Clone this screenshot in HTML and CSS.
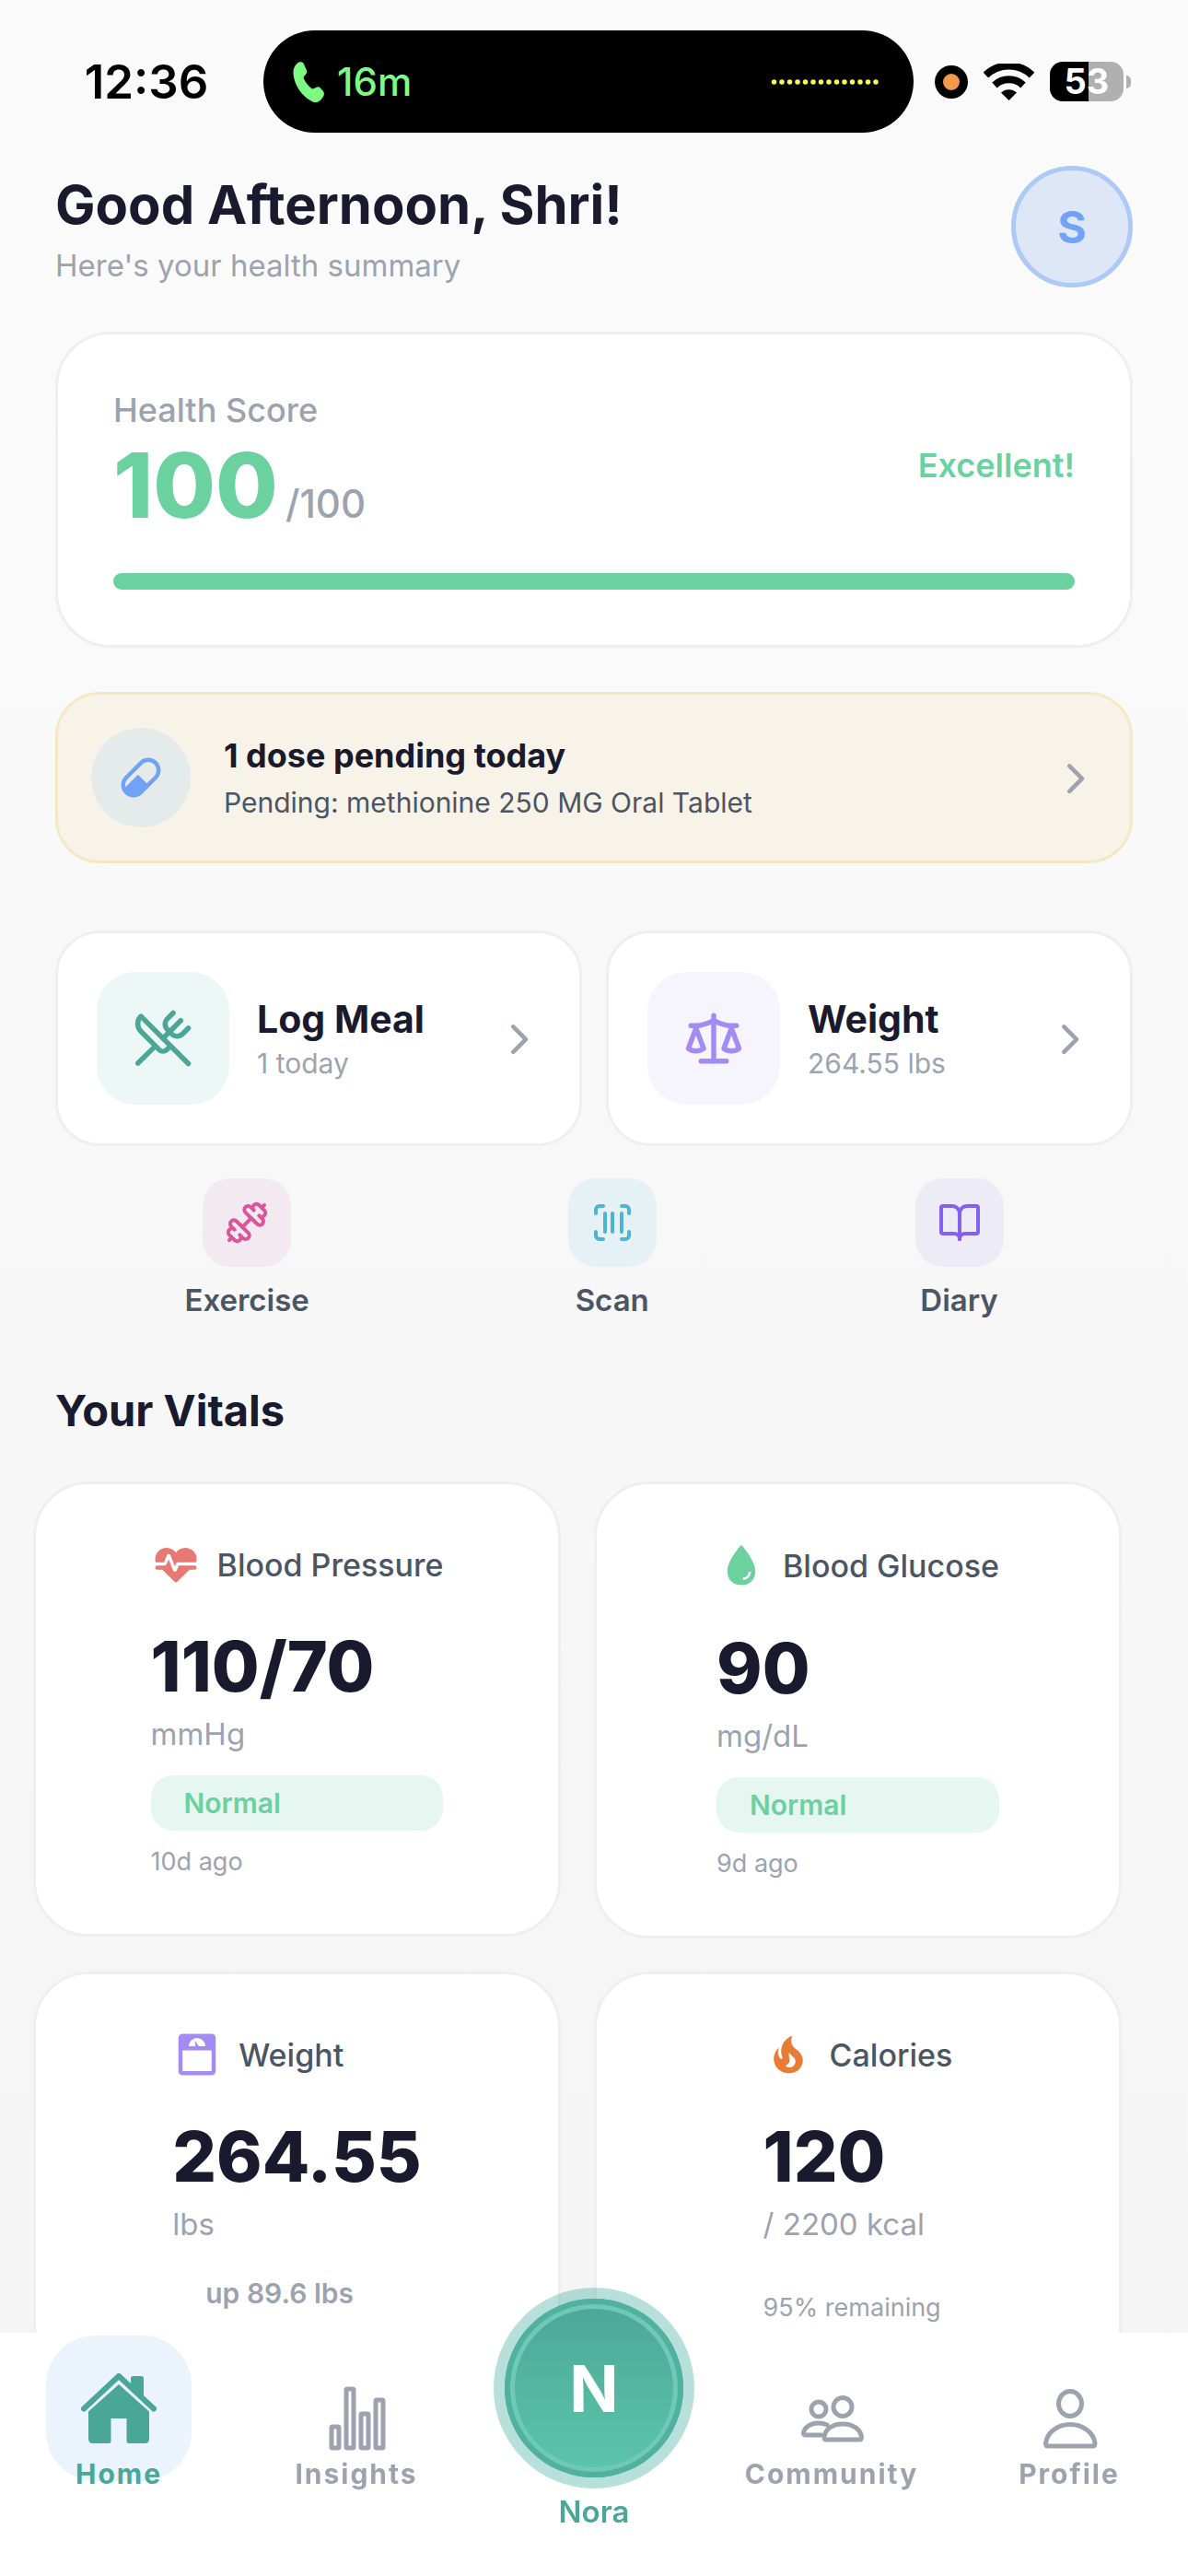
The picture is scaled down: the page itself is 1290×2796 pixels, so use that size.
FILE: index.html
```html
<!DOCTYPE html>
<html lang="en">
  <head>
    <meta charset="UTF-8" />
    <meta name="viewport" content="width=device-width, initial-scale=1.0" />
    <title>Health Summary</title>

    <link rel="stylesheet" href="styles.css">
  </head>

  <body>
    <div class="status-bar">
      <div class="status-time">12:36</div>
      <div class="island">
        <svg viewBox="0 0 34 46" width="34" height="46">
          <path d="M5 2.500c2-1.800 5.500-1.600 6.800.8l3 6.700c.8 2 .3 3.600-1 5l-1.600 1.800c-.8 1-.7 2 0 3.300 1.800 3.600 4.500 7 7.500 9.500 1.200 1 2 1.100 3.200.5l2.200-1.200c1.600-.9 3.300-.8 4.700.5l3 3.400c1.600 2 1.500 4.600-.2 6.600l-2.200 2.800c-2.300 2.900-5.800 3.600-9.300 2C9.500 38.500 1 25.500.500 13.500.3 8.500 2 5 5 2.500z" fill="#7dfb83"/>
        </svg>
        <span class="call-length">16m</span>
        <svg class="call-wave" viewBox="0 0 117 6" width="117" height="6">
          <path d="M3.500 3H114.200" fill="none" stroke="#f9fb52" stroke-width="5.500" stroke-linecap="round" stroke-dasharray="0 8.500"/>
        </svg>
      </div>
      <div class="status-icons">
        <span class="mic-dot"></span>
        <svg viewBox="0 0 55 40" width="55" height="40">
          <path d="M2.500 12.500a36 36 0 0 1 50 0" fill="none" stroke="#000" stroke-width="8"/>
          <path d="M12 23.500a22.500 22.500 0 0 1 31 0" fill="none" stroke="#000" stroke-width="8"/>
          <path d="M19 31.500a12.500 12.500 0 0 1 17 0L27.500 40z"/>
        </svg>
        <span class="battery">53</span>
      </div>
    </div>

    <main>
      <header class="greeting">
        <div>
          <h1>Good Afternoon, Shri!</h1>
          <p>Here's your health summary</p>
        </div>
        <button class="avatar" type="button">S</button>
      </header>

      <section class="card score-card">
        <div class="score-top">
          <div>
            <div class="score-label">Health Score</div>
            <div class="score-value">100<span>/100</span></div>
          </div>
          <div class="score-status">Excellent!</div>
        </div>
        <div class="score-track"><div class="score-fill" style="width: 100%"></div></div>
      </section>

      <a class="pending-card" href="#">
        <span class="pending-icon">
          <svg viewBox="0 0 24 24" width="54" height="54" fill="#70a3f5"><path d="M4.220 11.290L11.290 4.220C13.640 1.880 17.430 1.880 19.780 4.220C22.120 6.560 22.120 10.360 19.780 12.710L12.710 19.780C10.360 22.120 6.560 22.120 4.220 19.780C1.880 17.430 1.880 13.640 4.220 11.290M5.640 12.710C4.590 13.750 4.240 15.240 4.600 16.570L10.590 10.590L14.830 14.830L18.360 11.290C19.930 9.730 19.930 7.200 18.360 5.640C16.800 4.070 14.270 4.070 12.710 5.640L5.640 12.710Z"/></svg>
        </span>
        <span class="pending-text">
          <strong>1 dose pending today</strong>
          <small>Pending: methionine 250 MG Oral Tablet</small>
        </span>
        <svg class="chevron" viewBox="1 1 21 21"><path d="m9 18 6-6-6-6"/></svg>
      </a>

      <div class="actions">
        <a class="card action" href="#">
          <span class="action-icon meal">
            <svg class="line-icon" viewBox="0 0 24 24" width="66" height="66"><path d="m16 2-2.300 2.300a3 3 0 0 0 0 4.200l1.800 1.800a3 3 0 0 0 4.200 0L22 8"/><path d="M15 15 3.300 3.300a4.200 4.200 0 0 0 0 6l7.300 7.300c.7.7 2 .7 2.800 0L15 15Zm0 0 7 7"/><path d="m2.100 21.800 6.400-6.300"/><path d="m19 5-7 7"/></svg>
          </span>
          <span class="action-text">
            <strong>Log Meal</strong>
            <small>1 today</small>
          </span>
          <svg class="chevron" viewBox="1 1 21 21"><path d="m9 18 6-6-6-6"/></svg>
        </a>
        <a class="card action" href="#">
          <span class="action-icon weight">
            <svg class="line-icon" viewBox="0 0 24 24" width="66" height="66"><path d="m16 16 3-8 3 8c-.87.65-1.920 1-3 1s-2.130-.35-3-1Z"/><path d="m2 16 3-8 3 8c-.87.65-1.920 1-3 1s-2.130-.35-3-1Z"/><path d="M7 21h10"/><path d="M12 3v18"/><path d="M3 7h2c2 0 5-1 7-2 2 1 5 2 7 2h2"/></svg>
          </span>
          <span class="action-text">
            <strong>Weight</strong>
            <small>264.55 lbs</small>
          </span>
          <svg class="chevron" viewBox="1 1 21 21"><path d="m9 18 6-6-6-6"/></svg>
        </a>
      </div>

      <div class="shortcuts">
        <a class="shortcut" href="#">
          <span class="shortcut-icon exercise">
            <svg class="line-icon" viewBox="0 0 24 24" width="48" height="48"><path d="M17.596 12.768a2 2 0 1 0 2.829-2.829l-1.768-1.767a2 2 0 0 0 2.828-2.829l-2.828-2.828a2 2 0 0 0-2.829 2.828l-1.767-1.768a2 2 0 1 0-2.829 2.829z"/><path d="m2.500 21.500 1.400-1.400"/><path d="m20.100 3.900 1.400-1.400"/><path d="M5.343 21.485a2 2 0 1 0 2.829-2.828l1.767 1.768a2 2 0 1 0 2.829-2.829l-6.364-6.364a2 2 0 1 0-2.829 2.829l1.768 1.767a2 2 0 0 0-2.828 2.829z"/><path d="m9.600 14.400 4.800-4.800"/></svg>
          </span>
          Exercise
        </a>
        <a class="shortcut" href="#">
          <span class="shortcut-icon scan">
            <svg class="line-icon" viewBox="0 0 24 24" width="48" height="48"><path d="M3 7V5a2 2 0 0 1 2-2h2M17 3h2a2 2 0 0 1 2 2v2M21 17v2a2 2 0 0 1-2 2h-2M7 21H5a2 2 0 0 1-2-2v-2M8 7v10M12 7v10M17 7v10"/></svg>
          </span>
          Scan
        </a>
        <a class="shortcut" href="#">
          <span class="shortcut-icon diary">
            <svg class="line-icon" viewBox="0 0 24 24" width="48" height="48"><path d="M12 7v14"/><path d="M3 18a1 1 0 0 1-1-1V4a1 1 0 0 1 1-1h5a4 4 0 0 1 4 4 4 4 0 0 1 4-4h5a1 1 0 0 1 1 1v13a1 1 0 0 1-1 1h-6a3 3 0 0 0-3 3 3 3 0 0 0-3-3z"/></svg>
          </span>
          Diary
        </a>
      </div>

      <h2>Your Vitals</h2>
    </main>

    <section class="vitals">
      <article class="card vital">
        <div class="vital-body">
          <div class="vital-head">
            <svg viewBox="0 0 24 24" width="54" height="54" fill="#e87972"><path d="M7.500 4A5.500 5.500 0 0 0 2 9.500C2 10 2.090 10.500 2.220 11H6.300L7.570 7.630C7.870 6.830 9.050 6.750 9.430 7.630L11.500 13L12.090 11.580C12.220 11.250 12.570 11 13 11H21.780C21.910 10.500 22 10 22 9.500A5.500 5.500 0 0 0 16.500 4C14.640 4 13 4.930 12 6.340C11 4.930 9.360 4 7.500 4M3 12.500A1 1 0 0 0 2 13.500A1 1 0 0 0 3 14.500H5.440L11 20C12 20.900 12 20.900 13 20L18.560 14.500H21A1 1 0 0 0 22 13.500A1 1 0 0 0 21 12.500H13.400L12.470 14.800C12.070 15.810 10.920 15.670 10.550 14.830L8.500 9.500L7.540 11.830C7.390 12.210 7.050 12.500 6.600 12.500H3Z"/></svg>
            Blood Pressure
          </div>
          <div class="vital-value">110/70</div>
          <div class="vital-unit">mmHg</div>
          <div class="badge badge-normal">Normal</div>
          <div class="vital-time">10d ago</div>
        </div>
      </article>

      <article class="card vital">
        <div class="vital-body">
          <div class="vital-head">
            <svg viewBox="0 0 512 512" width="54" height="56" fill="#6bd19f"><path d="M256 43.910s-144 158.300-144 270.300c0 88.360 55.640 144 144 144s144-55.640 144-144c0-112-144-270.300-144-270.300zm16 362.300v-24a60.070 60.070 0 0 0 60-60h24a84.090 84.090 0 0 1-84 84z"/></svg>
            Blood Glucose
          </div>
          <div class="vital-value">90</div>
          <div class="vital-unit">mg/dL</div>
          <div class="badge badge-normal">Normal</div>
          <div class="vital-time">9d ago</div>
        </div>
      </article>

      <article class="card vital">
        <div class="vital-body">
          <div class="vital-head">
            <svg viewBox="0 0 24 24" width="54" height="54" fill="#a48bf3"><path d="M5 2H19A2 2 0 0 1 21 4V20A2 2 0 0 1 19 22H5A2 2 0 0 1 3 20V4A2 2 0 0 1 5 2M12 4A4 4 0 0 0 8 8H11.260L10.850 5.230L12.900 8H16A4 4 0 0 0 12 4M5 10V20H19V10H5Z"/></svg>
            Weight
          </div>
          <div class="vital-value">264.55</div>
          <div class="vital-unit">lbs</div>
          <div class="badge">up 89.6 lbs</div>
        </div>
      </article>

      <article class="card vital">
        <div class="vital-body">
          <div class="vital-head">
            <svg viewBox="0 0 24 24" width="54" height="54" fill="#e87b35"><path d="M17.660 11.200C17.430 10.900 17.150 10.640 16.890 10.380C16.220 9.780 15.460 9.350 14.820 8.720C13.330 7.260 13 4.850 13.950 3C13 3.230 12.170 3.750 11.460 4.320C8.870 6.400 7.850 10.070 9.070 13.220C9.110 13.320 9.150 13.420 9.150 13.550C9.150 13.770 9 13.970 8.800 14.050C8.570 14.150 8.330 14.090 8.140 13.930C8.080 13.880 8.040 13.830 8 13.760C6.870 12.330 6.690 10.280 7.450 8.640C5.780 10 4.870 12.300 5 14.470C5.060 14.970 5.120 15.470 5.290 15.970C5.430 16.570 5.700 17.170 6 17.700C7.080 19.430 8.950 20.670 10.960 20.920C13.100 21.190 15.390 20.800 17.030 19.320C18.860 17.660 19.500 15 18.560 12.720L18.430 12.460C18.220 12 17.660 11.200 17.660 11.200M14.500 17.500C14.220 17.740 13.760 18 13.400 18.100C12.280 18.500 11.160 17.940 10.500 17.280C11.690 17 12.400 16.120 12.610 15.230C12.780 14.430 12.460 13.770 12.330 13C12.210 12.260 12.230 11.630 12.500 10.940C12.690 11.320 12.890 11.700 13.130 12C13.900 13 15.110 13.440 15.370 14.800C15.410 14.940 15.430 15.080 15.430 15.230C15.460 16.050 15.100 16.950 14.500 17.500Z"/></svg>
            Calories
          </div>
          <div class="vital-value">120</div>
          <div class="vital-unit">/ 2200 kcal</div>
          <div class="vital-time remaining">95% remaining</div>
        </div>
      </article>
    </section>

    <nav class="tab-bar">
      <a class="tab active" href="#">
        <span class="tab-icon">
          <svg viewBox="0 0 96 96" width="96" height="96">
            <path d="M61 15.500q0-2.500 2.500-2.500h9q2.500 0 2.500 2.500V39L61 26z" fill="#4aa696"/>
            <path d="M10 48.500 48 13l38 35.500" fill="none" stroke="#4aa696" stroke-width="6" stroke-linecap="round" stroke-linejoin="round"/>
            <path d="M48 22 15 51.500V81q0 5 5 5h17q2.500 0 2.500-2.500V59h17v24.500q0 2.500 2.500 2.500h17q5 0 5-5V51.500z" fill="#4aa696"/>
          </svg>
        </span>
        <span class="tab-label">Home</span>
      </a>
      <a class="tab" href="#">
        <span class="tab-icon">
          <svg class="tab-line" viewBox="0 0 96 96" width="96" height="96">
            <rect x="21" y="68" width="8" height="23" rx="1"/>
            <rect x="37" y="27" width="8" height="64" rx="1"/>
            <rect x="53" y="54" width="8" height="37" rx="1"/>
            <rect x="69" y="39" width="8" height="52" rx="1"/>
          </svg>
        </span>
        <span class="tab-label">Insights</span>
      </a>
      <a class="tab nora" href="#">
        <span class="nora-button"><span class="nora-ring">N</span></span>
        <span class="nora-label">Nora</span>
      </a>
      <a class="tab" href="#">
        <span class="tab-icon">
          <svg class="tab-line" viewBox="0 0 96 96" width="96" height="96">
            <circle cx="60" cy="46.500" r="10"/>
            <path d="M40 79c1-8.500 9-14 20-14s19.500 5.500 20.500 14q0 3-2 3H42q-2 0-2-3z"/>
            <circle cx="34" cy="49" r="8"/>
            <path d="M36.500 77H20q-2.500 0-2.500-2.500C18.500 68 26 64 34 64c3.500 0 6.500.8 9 2" stroke-linecap="round"/>
          </svg>
        </span>
        <span class="tab-label">Community</span>
      </a>
      <a class="tab" href="#">
        <span class="tab-icon">
          <svg class="tab-line" viewBox="0 0 96 96" width="96" height="96">
            <ellipse cx="49" cy="43" rx="12.500" ry="13.500"/>
            <path d="M22.500 86c1.500-12 13-20.500 26.500-20.500S74.500 74 76 86q0 3-2.500 3H25q-2.500 0-2.500-3z"/>
          </svg>
        </span>
        <span class="tab-label">Profile</span>
      </a>
    </nav>
  </body>
</html>
```
FILE: styles.css
```css
* {
  box-sizing: border-box;
}

body {
  margin: 0;
  min-height: 100vh;
  background: linear-gradient(180deg, #fbfbfb 0%, #f4f4f4 100%);
  font-family: Inter, 'Liberation Sans', sans-serif;
  color: #1a1a2e;
}

a {
  color: inherit;
  text-decoration: none;
}

h1, h2, p {
  margin: 0;
}

svg {
  flex: none;
}

/* status bar */
.status-bar {
  display: flex;
  align-items: center;
  padding-top: 33px;
}

.status-time {
  width: 286px;
  padding-left: 32px;
  text-align: center;
  font-size: 51px;
  font-weight: 600;
  color: #000;
}

.island {
  display: flex;
  align-items: center;
  flex: 1;
  height: 111px;
  padding: 0 38px 0 32px;
  border-radius: 56px;
  background: #000;
}

.call-length {
  margin-left: 14px;
  font-size: 42px;
  font-weight: 500;
  color: #7dfb83;
}

.call-wave {
  margin-left: auto;
}

.status-icons {
  display: flex;
  align-items: center;
  gap: 17px;
  width: 298px;
  padding-left: 23px;
}

.mic-dot {
  width: 36px;
  height: 36px;
  border: 9px solid #000;
  border-radius: 50%;
  background: #f19a4b;
}

.battery {
  position: relative;
  width: 80px;
  height: 43px;
  border-radius: 14px;
  background: linear-gradient(90deg, #000 52%, #b0b0b0 52%);
  color: #fff;
  font-size: 38px;
  font-weight: 700;
  line-height: 43px;
  text-align: center;
}

.battery::after {
  content: "";
  position: absolute;
  top: 15px;
  right: -8px;
  width: 5px;
  height: 14px;
  border-radius: 0 6px 6px 0;
  background: #b0b0b0;
}

/* greeting */
main {
  padding: 36px 60px 0;
}

.greeting {
  display: flex;
  align-items: center;
  justify-content: space-between;
}

h1 {
  font-size: 58px;
  font-weight: 700;
  line-height: 84px;
}

.greeting p {
  font-size: 33px;
  line-height: 48px;
  color: #9ca3af;
}

.avatar {
  width: 132px;
  height: 132px;
  padding: 0;
  border: 5px solid #adc9f5;
  border-radius: 50%;
  background: #dde7f7;
  font-family: inherit;
  font-size: 48px;
  font-weight: 700;
  color: #70a3f5;
}

/* cards */
.card {
  border: 3px solid #efefef;
  border-radius: 60px;
  background: #fff;
}

.score-card {
  margin-top: 48px;
  padding: 60px;
}

.score-top {
  display: flex;
  align-items: center;
  justify-content: space-between;
}

.score-label {
  font-size: 36px;
  font-weight: 500;
  line-height: 44px;
  color: #9ca3af;
}

.score-value {
  display: flex;
  align-items: baseline;
  gap: 8px;
  height: 120px;
  font-size: 98px;
  font-weight: 800;
  line-height: 120px;
  color: #6bd19f;
}

.score-value span {
  font-size: 42px;
  font-weight: 500;
  line-height: 48px;
  color: #9ca3af;
}

.score-status {
  font-size: 36px;
  font-weight: 600;
  color: #6bd19f;
}

.score-track {
  height: 18px;
  margin-top: 35px;
  border-radius: 9px;
  background: #f0f0f0;
}

.score-fill {
  height: 100%;
  border-radius: 9px;
  background: #6bd19f;
}

.pending-card {
  display: flex;
  align-items: center;
  gap: 36px;
  margin-top: 48px;
  padding: 36px;
  border: 3px solid #f5e8c4;
  border-radius: 48px;
  background: #f8f3e9;
}

.pending-icon {
  display: flex;
  align-items: center;
  justify-content: center;
  width: 108px;
  height: 108px;
  border-radius: 50%;
  background: #e5eaeb;
}

.pending-text,
.action-text {
  display: flex;
  flex-direction: column;
  flex: 1;
}

.pending-text strong {
  font-size: 36px;
  font-weight: 700;
  line-height: 54px;
}

.pending-text small {
  font-size: 30px;
  line-height: 48px;
  color: #4b5563;
}

.chevron {
  width: 48px;
  height: 48px;
  fill: none;
  stroke: #9ca3af;
  stroke-width: 2;
  stroke-linecap: round;
  stroke-linejoin: round;
}

.line-icon {
  fill: none;
  stroke: currentColor;
  stroke-width: 2;
  stroke-linecap: round;
  stroke-linejoin: round;
}

.actions {
  display: flex;
  gap: 26px;
  margin-top: 73px;
}

.action {
  display: flex;
  align-items: center;
  flex: 1;
  gap: 30px;
  padding: 42px;
  border-radius: 48px;
}

.action-icon {
  display: flex;
  align-items: center;
  justify-content: center;
  width: 144px;
  height: 144px;
  border-radius: 42px;
}

.meal {
  background: #edf7f5;
  color: #4aa696;
}

.weight {
  background: #f6f5fd;
  color: #a48bf3;
}

.action-text strong {
  font-size: 41px;
  font-weight: 700;
  line-height: 54px;
}

.action-text small {
  font-size: 30px;
  line-height: 42px;
  color: #9ca3af;
}

/* shortcuts */
.shortcuts {
  display: flex;
  justify-content: space-around;
  margin-top: 35px;
}

.shortcut {
  display: flex;
  flex-direction: column;
  align-items: center;
  gap: 15px;
  font-size: 33px;
  font-weight: 600;
  line-height: 42px;
  color: #4b5563;
}

.shortcut-icon {
  display: flex;
  align-items: center;
  justify-content: center;
  width: 96px;
  height: 96px;
  border-radius: 30px;
}

.exercise {
  background: #f3eaf1;
  color: #db5598;
}

.scan {
  background: #e5f1f4;
  color: #4fb3d1;
}

.diary {
  background: #edebf6;
  color: #855fee;
}

h2 {
  margin-top: 69px;
  font-size: 47px;
  font-weight: 700;
  line-height: 60px;
}

/* vitals */
.vitals {
  display: grid;
  grid-template-columns: 1fr 1fr;
  align-items: start;
  gap: 36px;
  padding: 47px 72px 120px 36px;
}

.vital {
  display: flex;
  justify-content: center;
  padding: 60px;
}

.vital-head {
  display: flex;
  align-items: center;
  gap: 18px;
  margin-bottom: 36px;
  font-size: 34px;
  font-weight: 500;
  color: #4b5563;
}

.vital-value {
  font-size: 75px;
  font-weight: 800;
  line-height: 96px;
}

.vital-unit {
  font-size: 33px;
  line-height: 50px;
  color: #9ca3af;
}

.badge {
  margin-top: 20px;
  padding: 0 36px;
  border-radius: 24px;
  font-size: 30px;
  font-weight: 600;
  line-height: 60px;
  color: #9ca3af;
}

.badge-normal {
  background: #e6f6f0;
  color: #6bd19f;
}

.vital-time {
  margin-top: 16px;
  font-size: 27px;
  line-height: 36px;
  color: #9ca3af;
}

.remaining {
  margin-top: 48px;
}

/* bottom tabs */
.tab-bar {
  position: fixed;
  right: 0;
  bottom: 0;
  left: 0;
  display: flex;
  height: 264px;
  background: #fff;
}

.tab {
  display: flex;
  flex-direction: column;
  align-items: center;
  flex: 1;
  padding-top: 3px;
  color: #9ca3af;
}

.tab-icon {
  display: flex;
  align-items: center;
  justify-content: center;
  width: 158px;
  height: 158px;
  border-radius: 54px;
}

.active {
  color: #4aa696;
}

.active .tab-icon {
  background: #ebf3fd;
}

.tab-line {
  fill: none;
  stroke: currentColor;
  stroke-width: 5;
}

/* label sits over the lower edge of the highlight */
.tab-label {
  margin-top: -26px;
  font-size: 30px;
  font-weight: 700;
  line-height: 36px;
  letter-spacing: 2px;
}

.nora {
  padding-top: 0;
  color: #4aa696;
}

.nora-button {
  display: flex;
  width: 218px;
  height: 218px;
  margin-top: -49px;
  padding: 12px;
  border-radius: 50%;
  background: rgba(74, 178, 164, 0.4);
}

.nora-ring {
  display: flex;
  align-items: center;
  justify-content: center;
  flex: 1;
  border-radius: 50%;
  background: linear-gradient(180deg, #4ca696 0%, #5cc6ab 100%);
  box-shadow: inset 0 0 0 6px #51b19f, inset 0 0 0 11px #6fc8b8;
  color: #fff;
  font-size: 70px;
  font-weight: 700;
}

.nora-label {
  margin-top: 4px;
  font-size: 33px;
  font-weight: 600;
  line-height: 42px;
}
```
